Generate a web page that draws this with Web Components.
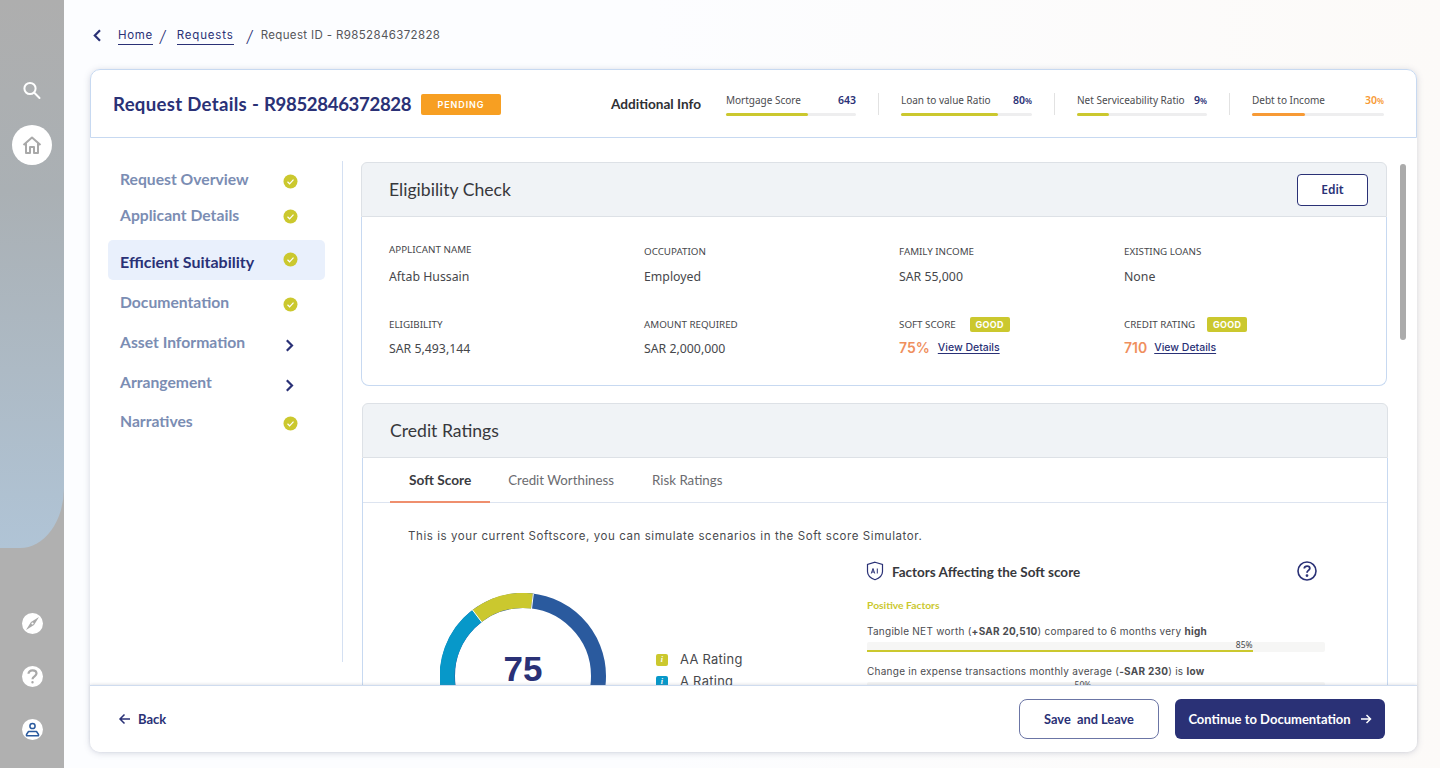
<!DOCTYPE html>
<html lang="en"><head><meta charset="utf-8"><title>Request Details</title>
<style>
html,body{margin:0;height:100%;overflow:hidden}
body{font-family:"Noto Sans",sans-serif;color:#3d3d3f;background:linear-gradient(90deg,#fcfdff 0,#fcfdff 45%,#fcfaf8 100%)}
app-shell{height:768px}
</style></head><body>
<app-shell>
  <side-rail slot="rail"></side-rail>
  <bread-crumbs slot="crumbs"></bread-crumbs>
  <request-card slot="card">
    <span slot="title"><span style="letter-spacing:.3px">Request Details - </span><span style="letter-spacing:-.35px">R9852846372828</span></span>
    <metric-item slot="metrics" w="130" label="Mortgage Score" value="643" fill="63" color="#cbc82e"></metric-item>
    <metric-item slot="metrics" label="Loan to value Ratio" value="80" unit="%" fill="74" color="#cbc82e" sep></metric-item>
    <metric-item slot="metrics" w="130" label="Net Serviceability Ratio" value="9" unit="%" fill="25" color="#cbc82e" sep></metric-item>
    <metric-item slot="metrics" w="132" label="Debt to Income" value="30" unit="%" fill="40" color="#f79a35" valcolor="#f79a35" sep></metric-item>

    <nav-item slot="nav" kind="check" h="38">Request Overview</nav-item>
    <nav-item slot="nav" kind="check" h="33">Applicant Details</nav-item>
    <nav-item slot="nav" kind="check" h="40" active style="margin-top:8px">Efficient Suitability</nav-item>
    <nav-item slot="nav" kind="check" h="40" style="margin-top:3px">Documentation</nav-item>
    <nav-item slot="nav" kind="chev" h="40">Asset Information</nav-item>
    <nav-item slot="nav" kind="chev" h="40">Arrangement</nav-item>
    <nav-item slot="nav" kind="check" h="38">Narratives</nav-item>

    <section-card slot="content" heading="Eligibility Check" action="Edit">
      <info-grid>
        <info-field label="APPLICANT NAME" top="0" mt="4">Aftab Hussain</info-field>
        <info-field label="OCCUPATION" top="2" mt="2">Employed</info-field>
        <info-field label="FAMILY INCOME" top="2" mt="2">SAR 55,000</info-field>
        <info-field label="EXISTING LOANS" top="2" mt="2">None</info-field>
        <info-field label="ELIGIBILITY" top="0" mt="1">SAR 5,493,144</info-field>
        <info-field label="AMOUNT REQUIRED" top="0" mt="1">SAR 2,000,000</info-field>
        <score-field label="SOFT SCORE" score="75%" ml="14" gap="8"></score-field>
        <score-field label="CREDIT RATING" score="710" ml="12" gap="7"></score-field>
      </info-grid>
    </section-card>

    <section-card slot="content" heading="Credit Ratings" class="second">
      <tab-bar><tab-item active>Soft Score</tab-item><tab-item>Credit Worthiness</tab-item><tab-item>Risk Ratings</tab-item></tab-bar>
      <soft-score>
        <span slot="intro">This is your current Softscore, you can simulate scenarios in the Soft score Simulator.</span>
        <donut-chart slot="chart"></donut-chart>
        <legend-row slot="legend" color="#cbc82e">AA Rating</legend-row>
        <legend-row slot="legend" color="#0798c9">A Rating</legend-row>
        <factor-bar slot="factors" pct="84.200" label="85%"><span>Tangible NET worth (<b>+SAR 20,510</b>) compared to 6 months very <b>high</b></span></factor-bar>
        <factor-bar slot="factors" pct="49" label="50%"><span>Change in expense transactions monthly average (<b>-SAR 230</b>) is <b>low</b></span></factor-bar>
      </soft-score>
    </section-card>

    <a-button slot="back" kind="link">Back</a-button>
    <a-button slot="actions" kind="outline">Save&nbsp; and Leave</a-button>
    <a-button slot="actions" kind="solid">Continue to Documentation</a-button>
  </request-card>
</app-shell>
<script>
const NAVY='#2a3176';
const HEAD='"Lato","Noto Sans",sans-serif';
const BODY='"Noto Sans",sans-serif';
const WIDE='"Inter","Noto Sans",sans-serif';
function def(name,html,init){
  customElements.define(name,class extends HTMLElement{
    connectedCallback(){
      if(this.shadowRoot)return;
      const s=this.attachShadow({mode:'open'});
      s.innerHTML=typeof html==='function'?html(this):html;
      if(init)init(this,s);
    }
  });
}
def('app-shell',`<style>
:host{display:flex;width:1440px;overflow:hidden}
.main{flex:1;min-width:0;display:flex;flex-direction:column;padding:0 23px 16px 26px}
</style><slot name="rail"></slot><div class="main"><slot name="crumbs"></slot><slot name="card"></slot></div>`);

def('side-rail',`<style>
:host{display:flex;flex:none;width:64px;height:768px;background:#b0b0b0;flex-direction:column;align-items:center;position:relative;overflow:hidden;color:#fff}
.shape{position:absolute;left:0;top:0;width:64px;height:548px;background:linear-gradient(180deg,#aeaeae 0,#aab0b4 35%,#b0c4d6 100%);border-bottom-right-radius:44px 60px}
.top,.bot{position:relative;display:flex;flex-direction:column;align-items:center}
.top{margin-top:80px}
.home{width:40px;height:40px;border-radius:50%;background:#fff;display:flex;align-items:center;justify-content:center;margin-top:25px}
.bot{margin-top:auto;margin-bottom:28px;gap:32px}
.c{width:21px;height:21px;border-radius:50%;background:#fff;display:flex;align-items:center;justify-content:center}
svg{display:block}
</style>
<div class="shape"></div>
<div class="top">
<svg width="20" height="20" viewBox="0 0 20 20" fill="none" stroke="#fff" stroke-width="2" stroke-linecap="round" style="margin-left:-1px"><circle cx="8" cy="8.500" r="5.600"/><path d="M12.300 12.800 17.500 18"/></svg>
<div class="home"><svg width="20" height="20" viewBox="0 0 20 20" fill="none" stroke="#a9a9a9" stroke-width="2" stroke-linejoin="round"><path d="M1.500 10 10 2.500l8.500 7.500M4 8.500V18h4v-6h4v6h4V8.500"/></svg></div>
</div>
<div class="bot">
<div class="c"><svg width="17" height="17" viewBox="0 0 17 17"><path d="M15 2 10 10 2 15 7 7Z" fill="#a9a9a9"/><circle cx="8.500" cy="8.500" r="1.100" fill="#fff"/></svg></div>
<div class="c"><svg width="13" height="15" viewBox="0 0 13 15" fill="none" stroke="#a9a9a9" stroke-width="2.200"><path d="M2.500 4.800C2.500 2.600 4.200 1.400 6.500 1.400s4 1.300 4 3.200c0 2.700-4 2.800-4 5.600"/><circle cx="6.500" cy="13.300" r=".6" fill="#a9a9a9" stroke-width="1.200"/></svg></div>
<div class="c"><svg width="15" height="15" viewBox="0 0 15 15" fill="none" stroke="#2a5a9e" stroke-width="1.500"><circle cx="7.500" cy="4" r="2.600"/><path d="M3.500 9.500h8l2 3v1.200H1.500v-1.200z" stroke-linejoin="round"/></svg></div>
</div>`);

def('bread-crumbs',`<style>
:host{display:flex;align-items:center;height:69px;box-sizing:border-box;padding-top:3px;flex:none;font:400 11.500px/1 ${WIDE};letter-spacing:.36px;color:#55565a}
svg{display:block;margin-left:2px;margin-right:15px}
a{color:${NAVY};text-decoration:none;letter-spacing:.62px;border-bottom:1px solid ${NAVY};padding:3px 0 2px}
.s{font-size:16px;color:${NAVY};font-style:italic;font-weight:300;margin:0 11px 0 7px}
</style>
<svg width="11" height="13" viewBox="0 0 11 13" fill="none" stroke="${NAVY}" stroke-width="2.200" style="margin-top:-2px"><path d="M8 1.200 2.800 6.500 8 11.800"/></svg>
<a>Home</a><span class="s">/</span><a style="letter-spacing:.85px">Requests</a><span class="s" style="margin:0 8px 0 13px">/</span><span>Request ID - R9852846372828</span>`);

def('request-card',`<style>
:host{display:flex;flex-direction:column;flex:1;min-height:0;background:#fff;border-radius:10px;box-shadow:0 1px 6px rgba(90,100,130,.25)}
.head{flex:none;height:69px;box-sizing:border-box;border:1px solid #c7d9f1;border-radius:10px 10px 0 0;display:flex;align-items:center;padding-left:22px}
.title{font:700 18.600px/1 ${HEAD};color:${NAVY};white-space:nowrap;padding-top:2px;width:298px}
.pill{margin:2px 0 0 10px;width:80px;height:21px;border-radius:2px;background:#f79f22;color:#fff;font:600 9px/21px ${WIDE};letter-spacing:.9px;text-align:center}
.info{margin-left:110px;font:700 13.600px/1 ${HEAD};color:#2f3034;white-space:nowrap;padding-top:3px}
.metrics{display:flex;margin-left:25px}
.body{flex:1;min-height:0;display:flex;overflow:hidden;position:relative}
.navc{flex:none;width:253px;box-sizing:border-box;padding:0 17px 0 18px;height:501px;border-right:1px solid #d4e0f2;margin:23px 18px 0 0;align-self:flex-start}
.cnt{flex:1;min-width:0;display:flex;flex-direction:column;padding-top:24px}
.bar{position:absolute;left:1310px;top:26px;width:6px;height:176px;border-radius:3px;background:#ababab}
.foot{flex:none;height:67px;box-sizing:border-box;border-top:1px solid #cfdcef;box-shadow:0 -1px 3px rgba(120,130,150,.2);display:flex;align-items:center;padding:0 32px 0 28px;position:relative;background:#fff;border-radius:0 0 10px 10px}
.act{margin-left:auto;display:flex;gap:16px}
</style>
<div class="head"><div class="title"><slot name="title"></slot></div><div class="pill">PENDING</div><div class="info">Additional Info</div><div class="metrics"><slot name="metrics"></slot></div></div>
<div class="body"><div class="navc"><slot name="nav"></slot></div><div class="cnt"><slot name="content"></slot></div><div class="bar"></div></div>
<div class="foot"><slot name="back"></slot><div class="act"><slot name="actions"></slot></div></div>`);

def('metric-item',e=>{
 const sep=e.hasAttribute('sep');const c=e.getAttribute('color');const vc=e.getAttribute('valcolor')||NAVY;
 const u=e.getAttribute('unit')?`<small>${e.getAttribute('unit')}</small>`:'';
 return `<style>
:host{display:block;width:${e.getAttribute('w')||131}px;box-sizing:content-box;${sep?'margin-left:22px;padding-left:22px;border-left:1px solid #e2e2e2':''};height:22px}
.r{display:flex;justify-content:space-between;font:400 10px/13px ${BODY};color:#4b4c50;white-space:nowrap;margin-top:1px}
b{font:600 10.500px/13px ${BODY};color:${vc}}small{font-size:8px}
.t{height:3px;margin-top:6px;background:#eeeeef;border-radius:2px}.f{height:3px;background:${c};width:${e.getAttribute('fill')}%;border-radius:2px}
</style><div class="r"><span>${e.getAttribute('label')}</span><b>${e.getAttribute('value')}${u}</b></div><div class="t"><div class="f"></div></div>`});

const CHECK=`<svg width="15" height="15" viewBox="0 0 15 15"><circle cx="7.500" cy="7.500" r="7" fill="#cbc82e"/><path d="M4.500 7.800 6.600 9.800 10.500 5.600" fill="none" stroke="#fff" stroke-width="1.200"/></svg>`;
const CHEV=`<svg width="15" height="15" viewBox="0 0 15 15" fill="none" stroke="${NAVY}" stroke-width="2.200"><path d="M3.800 2.200 9 7.500l-5.200 5.300"/></svg>`;
def('nav-item',e=>{
 const a=e.hasAttribute('active');
 return `<style>
:host{display:flex;align-items:center;height:${e.getAttribute('h')}px;padding:0 27px 0 12px;border-radius:5px;font:700 ${a?16:15.700}px/1 ${HEAD};color:${a?NAVY:'#7b8db3'};${a?'background:#e9f0fc':''}}
.t{flex:1;white-space:nowrap;padding-top:${a?3:0}px}
svg{display:block;margin-top:${e.getAttribute('kind')==='chev'?4:(a?-2:2)}px}
</style><span class="t"><slot></slot></span>${e.getAttribute('kind')==='chev'?CHEV:CHECK}`});

def('section-card',e=>{
 const act=e.getAttribute('action');
 const second=e.classList.contains('second');
 return `<style>
:host{display:flex;flex-direction:column;flex:none;width:1026px;${second?'margin:17px 0 0 1px':'height:224px'}}
.h{flex:none;height:55px;box-sizing:border-box;background:#f0f3f6;border:1px solid #dde1e6;border-radius:6px 6px 0 0;display:flex;align-items:center;padding:0 18px 0 27px}
h2{margin:0;font:400 17.600px/1 ${HEAD};color:#37383c;flex:1}
.b{width:71px;height:32px;box-sizing:border-box;border:1px solid ${NAVY};border-radius:4px;background:#fff;font:600 12px/30px ${BODY};color:${NAVY};text-align:center}
.m{flex:1;box-sizing:border-box;border:1px solid #c7d9f1;border-top:0;border-radius:${second?'0':'0 0 8px 8px'};${second?'border-bottom:0':''}}
</style><div class="h"><h2>${e.getAttribute('heading')}</h2>${act?`<div class="b">${act}</div>`:''}</div><div class="m"><slot></slot></div>`});

def('info-grid',`<style>:host{display:grid;grid-template-columns:255px 255px 225px 1fr;grid-template-rows:75px 60px;padding:26px 0 0 27px}</style><slot></slot>`);
def('info-field',e=>`<style>
:host{display:block;padding-top:${e.getAttribute('top')}px}
.l{font:400 9.800px/13px ${BODY};color:#46474b;height:21px}
.v{font:400 12.300px/17px ${BODY};color:#46474b;margin-top:${e.getAttribute('mt')}px}
</style><div class="l">${e.getAttribute('label')}</div><div class="v"><slot></slot></div>`);
def('score-field',e=>`<style>
:host{display:block;margin-top:-1px}
.r{display:flex;align-items:center;height:15px;font:400 9.800px/13px ${BODY};color:#46474b;white-space:nowrap}
.g{margin-left:${e.getAttribute('ml')}px;width:40px;height:15px;background:#cbc82e;border-radius:2px;color:#fff;font:700 9px/15px ${WIDE};text-align:center;letter-spacing:.3px}
.s{display:flex;align-items:center;margin-top:8px;height:16px}
b{font:600 14px/1 ${WIDE};color:#ef8f5e}
a{margin-left:${e.getAttribute('gap')||9}px;font:500 10.500px/1 ${WIDE};color:${NAVY};text-decoration:underline;text-underline-offset:2px}
</style><div class="r">${e.getAttribute('label')}<span class="g">GOOD</span></div><div class="s"><b>${e.getAttribute('score')}</b><a>View Details</a></div>`);

def('tab-bar',`<style>:host{display:flex;height:45px;box-sizing:border-box;border-bottom:1px solid #dde4f0;padding-left:27px}</style><slot></slot>`);
def('tab-item',e=>{const a=e.hasAttribute('active');return `<style>
:host{display:block;height:45px;box-sizing:border-box;padding:16px 20px 0 18px;font:${a?700:400} ${a?13.700:13.300}px/1 ${HEAD};color:${a?'#3a3b3f':'#6b6c70'};white-space:nowrap;${a?'border-bottom:2px solid #ef8f6e;padding:15px 19px 0':''}}
</style><slot></slot>`});

def('soft-score',`<style>
:host{display:block;position:relative}
.intro{padding:26px 0 0 45px;font:400 11.500px/14px ${WIDE};letter-spacing:.58px;color:#48494d}
.cols{display:flex;margin-top:18px}
.left{flex:none;width:504px;display:flex;box-sizing:border-box;padding:32px 0 0 77px}
.leg{margin-left:50px;padding-top:61px;display:flex;flex-direction:column;gap:10px}
.right{flex:none;width:459px}
.fh{display:flex;align-items:center;height:20px;font:700 13.500px/1 ${HEAD};color:#37383c;margin-left:-1px}
.fh span{margin-left:8px;flex:1;padding-top:4px}
.q{display:block;margin-right:9px}
.pos{font:700 10.300px/10px ${HEAD};color:#cbc82e;margin:19px 0 15px}
</style>
<div class="intro"><slot name="intro"></slot></div>
<div class="cols"><div class="left"><slot name="chart"></slot><div class="leg"><slot name="legend"></slot></div></div>
<div class="right"><div class="fh"><svg width="18" height="20" viewBox="0 0 18 20" fill="none" stroke="${NAVY}" stroke-width="1.200"><path d="M9 1.200 16.500 3.500v7c0 4-3.500 6.800-7.500 8.200-4-1.400-7.500-4.200-7.500-8.200v-7z"/><path d="M5.300 12.500 7 7.500 8.700 12.500M5.900 11h2.200M11.300 7.500v5" stroke-width="1"/></svg><span>Factors Affecting the Soft score</span>
<svg class="q" width="20" height="20" viewBox="0 0 20 20" fill="none" stroke="${NAVY}" stroke-width="1.600"><circle cx="10" cy="10" r="9"/><path d="M7.300 7.600c0-1.500 1.200-2.500 2.800-2.500s2.700 1 2.700 2.300c0 1.900-2.800 2.100-2.800 4.300" stroke-width="1.800"/><circle cx="10" cy="14.600" r=".6" fill="${NAVY}"/></svg></div>
<div class="pos">Positive Factors</div><slot name="factors"></slot></div></div>`);

def('donut-chart',`<style>:host{display:block;flex:none;width:166px;height:166px;position:relative}
svg{display:block}
.n{position:absolute;left:0;right:0;top:60px;text-align:center;font:700 35px/32px "Liberation Sans",sans-serif;color:${NAVY}}
</style><svg width="166" height="166" viewBox="0 0 166 166" fill="none" stroke-width="15">
<circle cx="83" cy="83" r="75.500" stroke="#2a5a9e"/>
<path d="M9 100 A75.500 75.500 0 0 1 37 23" stroke="#0798c9"/>
<path d="M37 23 A75.500 75.500 0 0 1 92 8" stroke="#cbc82e"/>
<path d="M93.300 1 L91.500 16" stroke="#fff" stroke-width="1"/><path d="M32.500 17 L41.600 29" stroke="#fff" stroke-width="1"/>
</svg><div class="n">75</div>`);

def('legend-row',e=>`<style>:host{display:flex;align-items:center;height:12px;font:400 12.900px/1 ${WIDE};letter-spacing:.3px;color:#46474b;white-space:nowrap}
i{width:12px;height:12px;border-radius:2px;background:${e.getAttribute('color')};margin-right:12px;color:#fff;font:italic 700 8px/12px "Liberation Serif",serif;text-align:center}</style><i>i</i><slot></slot>`);

def('factor-bar',e=>`<style>:host{display:block;font:400 10px/13px ${WIDE};letter-spacing:.26px;color:#4b4c50;margin-bottom:13px;white-space:nowrap}
::slotted(*){display:block}
.t{margin-top:4px;height:10px;width:458px;background:#f6f6f5;border-radius:2px;position:relative}
.f{position:absolute;left:0;bottom:0;height:2px;width:${e.getAttribute('pct')}%;background:#cbc82e}
.p{position:absolute;left:0;width:${e.getAttribute('pct')}%;top:-2px;text-align:right;font:400 8.500px/10px ${BODY};letter-spacing:0;color:#46474b}
</style><slot></slot><div class="t"><div class="f"></div><div class="p">${e.getAttribute('label')}</div></div>`);

def('a-button',e=>{
 const k=e.getAttribute('kind');
 const base={link:`color:${NAVY};font:700 13px/1 ${HEAD}`,outline:`width:140px;height:40px;box-sizing:border-box;border:1px solid #6b75a5;border-radius:8px;background:#fff;color:${NAVY};font:700 12.800px/1 ${HEAD}`,solid:`width:210px;height:40px;border-radius:6px;background:${NAVY};color:#fff;font:700 13px/1 ${HEAD}`}[k];
 const L=`<svg width="14" height="12" viewBox="0 0 14 12" fill="none" stroke="${NAVY}" stroke-width="1.500" style="margin-right:6px"><path d="M12 6H2M6.500 1.500 2 6l4.500 4.500"/></svg>`;
 const R=`<svg width="12" height="12" viewBox="0 0 12 12" fill="none" stroke="#fff" stroke-width="1.500" style="margin-left:9px"><path d="M1 6h9.500M6.500 2 10.500 6l-4 4"/></svg>`;
 return `<style>:host{display:flex;align-items:center;justify-content:center;white-space:nowrap;${base}}</style>${k==='link'?L:''}<slot></slot>${k==='solid'?R:''}`});
</script>
</body></html>
